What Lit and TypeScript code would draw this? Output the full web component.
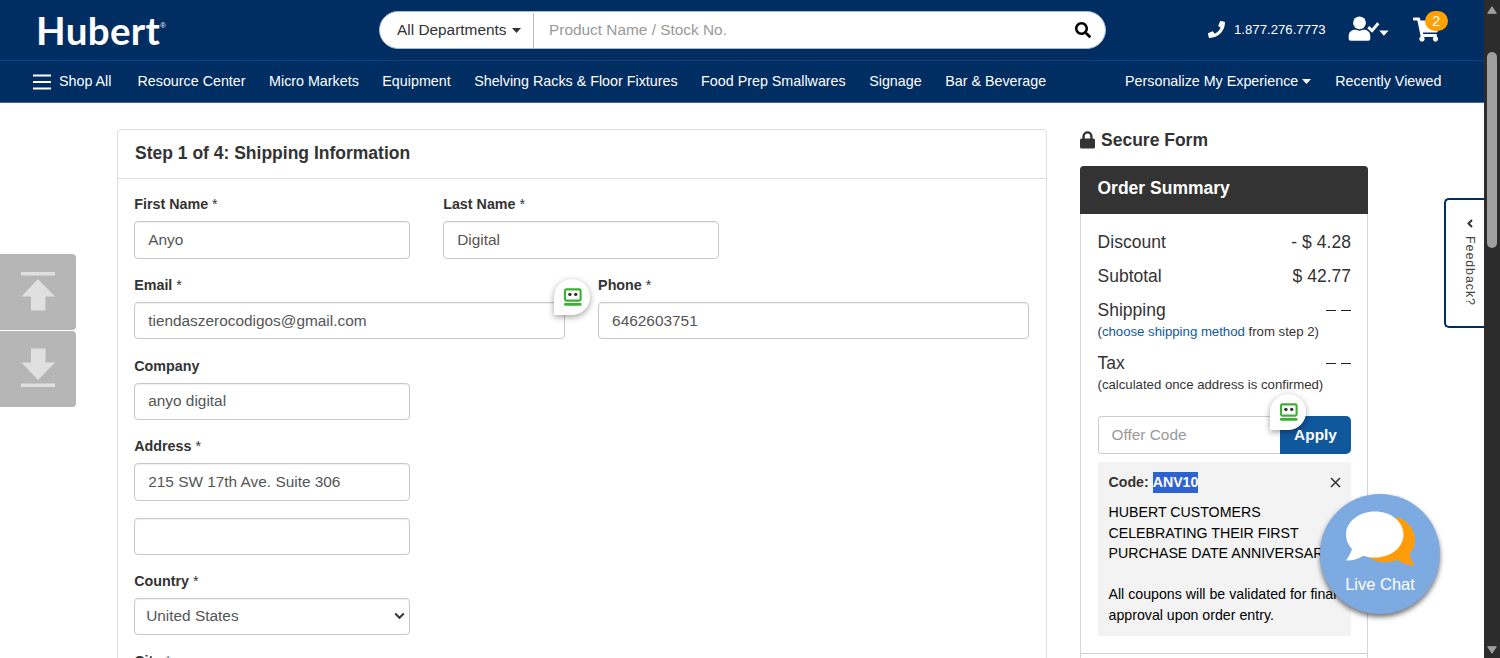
import { LitElement, html, css, svg } from "lit";
import { customElement, property } from "lit/decorators.js";

const sans = css`"Liberation Sans", Arial, sans-serif`;

@customElement("robo-badge")
class RoboBadge extends LitElement {
  static styles = css`
    :host { display: block; width: 36px; height: 36px; border-radius: 18px 18px 18px 0; background: #fff;
      box-shadow: 0 2px 6px rgba(0, 0, 0, 0.38); }
    svg { display: block; }
  `;
  render() {
    return html`<svg width="36" height="36" viewBox="0 0 36 36">
      <rect x="11" y="10.4" width="15.6" height="11.2" rx="1.4" fill="#fff" stroke="#3cb034" stroke-width="2.1"></rect>
      <circle cx="15.9" cy="15.400" r="1.7" fill="#333"></circle><circle cx="21.700" cy="15.400" r="1.7" fill="#333"></circle>
      <rect x="10" y="24" width="17.600" height="2.8" rx="1.2" fill="#3cb034"></rect>
    </svg>`;
  }
}

@customElement("form-field")
class FormField extends LitElement {
  @property() label = "";
  @property() value = "";
  @property({ type: Boolean }) required = false;
  @property({ type: Boolean }) choice = false;
  static styles = css`
    :host { display: block; font-family: ${sans}; }
    label { display: block; height: 20px; line-height: 20px; margin-bottom: 7px; font-size: 14.3px; font-weight: 700; color: #333; white-space: pre; }
    .star { font-weight: 400; }
    .box { box-sizing: border-box; height: 37.4px; border: 1px solid #c8c8c8; border-radius: 4px; padding: 0 13px;
      display: flex; align-items: center; justify-content: space-between; font-size: 15.4px; color: #555; background: #fff;
      box-shadow: inset 0 1px 1px rgba(0, 0, 0, 0.06); }
    .choice { padding: 0 4px 0 11px; }
  `;
  render() {
    return html`
      ${this.label ? html`<label>${this.label}${this.required ? html`<span class="star"> *</span>` : ""}</label>` : ""}
      <div class="box ${this.choice ? "choice" : ""}"><span>${this.value}</span>
        ${this.choice ? html`<svg width="11" height="8" viewBox="0 0 11 8"><path d="M1.2 1.6 5.5 5.8 9.8 1.6" fill="none" stroke="#3a3a3a" stroke-width="2.1"></path></svg>` : ""}
      </div>`;
  }
}

const caret = html`<svg class="caret" width="9" height="5" viewBox="0 0 9 5"><path d="M0 0H9L4.5 5Z" fill="currentColor"></path></svg>`;

@customElement("site-header")
class SiteHeader extends LitElement {
  static styles = css`
    :host { display: block; background: #002d62; color: #fff; font-family: ${sans}; height: 103px; box-sizing: border-box; border-bottom: 1px solid #45658c; }
    .top { height: 60px; display: flex; align-items: center; border-bottom: 1px solid #0b4383; }
    .logo { width: 343px; margin-left: 36px; display: flex; align-items: flex-start; height: 46px; margin-top: -1px;
      font: 700 38.5px/46px Lato, sans-serif; letter-spacing: 0.35px; box-sizing: border-box; }
    .reg { font: 7.5px/8px ${sans}; margin-top: 15px; letter-spacing: 0; }
    .search { display: flex; align-items: center; width: 727px; height: 38px; box-sizing: border-box; border-radius: 19px; background: #fff; color: #333;
      border: 1px solid #a9bad0; font-size: 15.4px; }
    .dept { width: 136px; height: 35px; border-right: 1px solid #bbb; display: flex; align-items: center; padding-left: 17px; gap: 5px; }
    .hint { flex: 1; padding-left: 15px; color: #999; }
    .mag { margin-right: 14px; }
    .phone { margin-left: 102px; display: flex; align-items: center; gap: 9px; font-size: 13.2px; margin-top: -2px; }
    .user { margin-left: 22px; margin-top: -2px; }
    .cart { margin-left: 24px; position: relative; margin-top: -2px; }
    .badge { position: absolute; left: 12px; top: -6px; width: 23px; height: 20px; border-radius: 10px; background: #ffa200; font-size: 14.5px; line-height: 20px; text-align: center; }
    svg { display: block; }
    nav { height: 40px; display: flex; align-items: center; font-size: 14.3px; padding: 0 42.5px 0 33px; white-space: nowrap; }
    .burger { margin: 2px 8px 0 0; }
    .all { margin-right: 26px; }
    .links { display: flex; gap: 23.5px; flex: 1; }
    .right { display: flex; gap: 24px; }
    .drop { display: flex; align-items: center; gap: 4px; }
  `;
  render() {
    const links = ["Resource Center", "Micro Markets", "Equipment", "Shelving Racks & Floor Fixtures", "Food Prep Smallwares", "Signage", "Bar & Beverage"];
    return html`
      <div class="top">
        <div class="logo">Hubert<span class="reg">®</span></div>
        <div class="search">
          <div class="dept">All Departments ${caret}</div>
          <div class="hint">Product Name / Stock No.</div>
          <svg class="mag" width="16" height="16" viewBox="0 0 512 512"><path d="M505 442.700 405.300 343c-4.500-4.500-10.600-7-17-7H372c27.600-35.300 44-79.700 44-128C416 93.100 322.900 0 208 0S0 93.100 0 208s93.100 208 208 208c48.300 0 92.700-16.400 128-44v16.300c0 6.400 2.500 12.500 7 17l99.700 99.700c9.400 9.400 24.600 9.400 33.900 0l28.300-28.300c9.400-9.400 9.400-24.600.1-34zM208 336c-70.700 0-128-57.200-128-128 0-70.700 57.200-128 128-128 70.700 0 128 57.200 128 128 0 70.700-57.200 128-128 128z"></path></svg>
        </div>
        <div class="phone">
          <svg width="17" height="17" viewBox="0 0 512 512"><path fill="#fff" d="M493.400 24.600l-104-24c-11.300-2.600-22.900 3.300-27.500 13.900l-48 112c-4.200 9.800-1.400 21.300 6.900 28l60.600 49.600c-36 76.700-98.900 140.500-177.200 177.200l-49.600-60.600c-6.800-8.300-18.200-11.100-28-6.900l-112 48C3.900 366.500-2 378.100.6 389.400l24 104C27.100 504.200 36.700 512 48 512c256.100 0 464-207.500 464-464 0-11.200-7.700-20.900-18.600-23.400z"></path></svg>
          <span>1.877.276.7773</span>
        </div>
        <svg class="user" width="41" height="26" viewBox="0 0 41 26">
          <circle cx="11.500" cy="6.800" r="6.400" fill="#fff"></circle>
          <path d="M.700 22.800v-2.600c0-4 2.800-6.400 6.300-6.400h.8c2.300 1.100 5.100 1.100 7.400 0h.8c3.500 0 6.300 2.400 6.300 6.400v2.600c0 1.200-.8 2-2 2H2.700c-1.200 0-2-.8-2-2z" fill="#fff"></path>
          <path d="M20.300 11.200 24 14.600 30.300 7.200" fill="none" stroke="#fff" stroke-width="3"></path>
          <path d="M31.200 14.500H40.600L35.900 19.700Z" fill="#fff"></path>
        </svg>
        <div class="cart">
          <svg width="27" height="25" viewBox="0 0 576 512"><path fill="#fff" d="M528.100 301.300l47.300-208C578.800 78.300 567.400 64 552 64H159.200l-9.200-44.800C147.800 8 137.900 0 126.500 0H24C10.700 0 0 10.700 0 24v16c0 13.300 10.700 24 24 24h69.900l70.200 343.400C147.300 417.100 136 435.200 136 456c0 30.900 25.100 56 56 56s56-25.100 56-56c0-15.700-6.400-29.800-16.800-40h209.600C430.400 426.200 424 440.300 424 456c0 30.900 25.100 56 56 56s56-25.100 56-56c0-22.200-12.900-41.300-31.600-50.400l5.500-24.300c3.400-15-8-29.300-23.400-29.300H218.100l-6.500-32h293.100c11.200 0 20.900-7.800 23.400-18.700z"></path></svg>
          <span class="badge">2</span>
        </div>
      </div>
      <nav>
        <svg class="burger" width="18" height="16" viewBox="0 0 18 16"><path d="M0 1.500H18M0 8H18M0 14.500H18" stroke="#fff" stroke-width="2"></path></svg>
        <span class="all">Shop All</span>
        <div class="links">${links.map((l) => html`<span>${l}</span>`)}</div>
        <div class="right"><span class="drop">Personalize My Experience ${caret}</span><span>Recently Viewed</span></div>
      </nav>`;
  }
}

@customElement("shipping-card")
class ShippingCard extends LitElement {
  static styles = css`
    :host { display: block; box-sizing: border-box; width: 930px; height: 640px; border: 1px solid #ddd; border-radius: 4px; font-family: ${sans}; background: #fff; }
    h2 { margin: 0; height: 48px; line-height: 46px; padding-left: 17px; border-bottom: 1px solid #ddd; font-size: 17.5px; color: #333; }
    .body { padding: 15.3px 17px 0 16.2px; display: flex; flex-direction: column; gap: 16.3px; }
    .row { display: flex; gap: 33px; position: relative; }
    .third { width: 276px; }
    .second-line { margin: 1px 0 -1px; }
    .half { flex: 1; }
    robo-badge { position: absolute; left: 420px; top: 4px; }
  `;
  render() {
    return html`
      <h2>Step 1 of 4: Shipping Information</h2>
      <div class="body">
        <div class="row"><form-field class="third" label="First Name" value="Anyo" required></form-field><form-field class="third" label="Last Name" value="Digital" required></form-field></div>
        <div class="row"><form-field class="half" label="Email" value="tiendaszerocodigos@gmail.com" required></form-field><form-field class="half" label="Phone" value="6462603751" required></form-field><robo-badge></robo-badge></div>
        <form-field class="third" label="Company" value="anyo digital"></form-field>
        <form-field class="third" label="Address" value="215 SW 17th Ave. Suite 306" required></form-field>
        <form-field class="third second-line"></form-field>
        <form-field class="third" label="Country" value="United States" required choice></form-field>
        <form-field class="third" label="City" required></form-field>
      </div>`;
  }
}

@customElement("order-summary")
class OrderSummary extends LitElement {
  static styles = css`
    :host { display: block; width: 288px; font-family: ${sans}; color: #333; }
    .secure { display: flex; align-items: center; gap: 6px; height: 22px; font-size: 17.5px; font-weight: 700; }
    .panel { margin-top: 15px; border: 1px solid #d4d4d4; border-top: 0; border-radius: 4px 4px 0 0; height: 520px; }
    h2 { margin: 0 -1px; height: 47.5px; line-height: 45px; padding-left: 17.5px; background: #333; color: #fff; font-size: 17.5px; border-radius: 4px 4px 0 0; }
    .body { padding: 12px 16px 17px 16.5px; border-bottom: 1px solid #d4d4d4; }
    .line { display: flex; justify-content: space-between; height: 34px; align-items: center; font-size: 17.5px; }
    .line:first-child { letter-spacing: 0.05px; }
    .note { font-size: 13.2px; line-height: 18px; height: 19px; margin-top: -4.5px; white-space: nowrap; }
    .tax { margin-top: 4.5px; }
    .note a { color: #0f5a9e; }
    .dash { display: flex; gap: 5px; }
    .dash i { width: 10px; height: 1px; background: #222; }
    .offer { display: flex; height: 37.5px; margin-top: 21px; position: relative; font-size: 15.4px; }
    .code { flex: 1; border: 1px solid #ccc; border-right: 0; border-radius: 4px 0 0 4px; padding-left: 13px; display: flex; align-items: center; color: #999; }
    .apply { width: 71px; background: #10589c; color: #fff; font-weight: 700; border-radius: 0 5px 5px 0; display: flex; align-items: center; justify-content: center; }
    robo-badge { position: absolute; left: 172.5px; top: -22.5px; }
    .coupon { margin-top: 8.5px; background: #f3f3f3; height: 174px; box-sizing: border-box; padding: 10px 10px 0 11px; font-size: 14.2px; line-height: 20.5px; color: #000; white-space: nowrap; }
    .head { display: flex; justify-content: space-between; align-items: center; height: 21px; color: #333; font-weight: 700; margin-bottom: 9px; }
    .sel { background: #2f62d0; color: #fff; display: inline-block; height: 21px; line-height: 20px; }
    p { margin: 0 0 20.5px; }
  `;
  render() {
    const dash = html`<span class="dash"><i></i><i></i></span>`;
    return html`
      <div class="secure"><svg width="15" height="18" viewBox="0 0 15 18"><path d="M3.6 8V5.3a3.9 3.9 0 0 1 7.8 0V8" fill="none" stroke="#333" stroke-width="2.4"></path><rect y="7.6" width="15" height="10" rx="1.5" fill="#333"></rect></svg>Secure Form</div>
      <div class="panel">
        <h2>Order Summary</h2>
        <div class="body">
          <div class="line"><span>Discount</span><span>- $ 4.28</span></div>
          <div class="line"><span>Subtotal</span><span>$ 42.77</span></div>
          <div class="line"><span>Shipping</span>${dash}</div>
          <div class="note">(<a>choose shipping method</a> from step 2)</div>
          <div class="line tax"><span>Tax</span>${dash}</div>
          <div class="note">(calculated once address is confirmed)</div>
          <div class="offer"><div class="code">Offer Code</div><div class="apply">Apply</div><robo-badge></robo-badge></div>
          <div class="coupon">
            <div class="head"><span>Code: <span class="sel">ANV10</span></span><svg width="11" height="11" viewBox="0 0 11 11"><path d="M1 1 10 10M10 1 1 10" stroke="#333" stroke-width="1.5"></path></svg></div>
            <p>HUBERT CUSTOMERS<br>CELEBRATING THEIR FIRST<br>PURCHASE DATE ANNIVERSARY</p>
            <p>All coupons will be validated for final<br>approval upon order entry.</p>
          </div>
        </div>
      </div>`;
  }
}

@customElement("app-root")
class AppRoot extends LitElement {
  static styles = css`
    :host { display: flex; position: relative; width: 1500px; height: 658px; overflow: hidden; background: #fff; font-family: ${sans}; }
    .page { width: 1484px; }
    main { display: flex; padding: 26px 0 0 117px; gap: 33px; align-items: flex-start; }
    .bar { width: 16px; height: 658px; background: #2c2c2c; display: flex; flex-direction: column; align-items: center; box-sizing: border-box; padding: 6px 0 4px; }
    .thumb { width: 10px; height: 196px; border-radius: 5px; background: #9f9f9f; margin-top: 38px; }
    .bar .down { margin-top: auto; }
    .jump { position: absolute; left: 0; top: 254px; display: flex; flex-direction: column; gap: 1px; }
    .jump svg { display: block; background: #b6b6b6; border-radius: 0 4px 4px 0; }
    .feedback { position: absolute; left: 1444px; top: 198px; width: 40px; height: 130px; box-sizing: border-box; border: 2px solid #002d62; border-right: 0; border-radius: 5px 0 0 5px; background: #fff;
      display: flex; flex-direction: column; align-items: center; padding: 18.5px 0 0 9px; gap: 8px; }
    .feedback span { writing-mode: vertical-rl; font-size: 12.5px; letter-spacing: 0.9px; line-height: 16px; color: #444; }
    .chat { position: absolute; left: 1320px; top: 494px; width: 120px; height: 120px; border-radius: 60px; background: #7dabe1; box-shadow: 0 3px 5px rgba(0, 0, 0, 0.55); color: #fff;
      display: flex; flex-direction: column; align-items: center; font-size: 16.5px; }
    .chat svg { margin: 15.5px 0 6.5px 1px; }
    .chat span { line-height: 20px; }
  `;
  render() {
    const arrow = svg`<path d="M21 18H55V21.5H21Z M38 25 55 42.5H45.5V56.5H31V42.5H21.5Z" fill="#e0e0e0"></path>`;
    return html`
      <div class="page">
        <site-header></site-header>
        <main><shipping-card></shipping-card><order-summary></order-summary></main>
      </div>
      <div class="bar">
        <svg width="10" height="8" viewBox="0 0 10 8"><path d="M5 .7 9.3 7.3H.7Z" fill="#9f9f9f" stroke="#9f9f9f" stroke-linejoin="round"></path></svg>
        <div class="thumb"></div>
        <svg class="down" width="10" height="8" viewBox="0 0 10 8"><path d="M5 7.3 9.3 .7H.7Z" fill="#9f9f9f" stroke="#9f9f9f" stroke-linejoin="round"></path></svg>
      </div>
      <div class="jump">
        <svg width="76" height="76" viewBox="0 0 76 76">${arrow}</svg>
        <svg width="76" height="76" viewBox="0 0 76 76"><g transform="translate(0 74) scale(1 -1)">${arrow}</g></svg>
      </div>
      <div class="feedback"><svg width="8" height="9" viewBox="0 0 8 9"><path d="M6 1 2.5 4.5 6 8" fill="none" stroke="#333" stroke-width="2"></path></svg><span>Feedback?</span></div>
      <div class="chat">
        <svg width="70" height="58" viewBox="0 0 70 58">
          <path d="M51 7C60 9 69 19 69 30c0 6-3 11-5.5 14 .5 4 2.5 7 5 11.5-6 0-12-2-17-5.5-11 4-24 2-30-4Z" fill="#ff9c08"></path>
          <path d="M29 1.500C45 1.500 57.500 11.500 57.500 24.500S45 47.500 29 47.500c-4 0-8-.500-11.500-1.800C12 49 6 51 0 50.500 2.500 47 5 42.500 6 39 2 35 0 30 0 24.500 0 11.500 13 1.500 29 1.500Z" fill="#fff"></path>
        </svg>
        <span>Live Chat</span>
      </div>`;
  }
}
